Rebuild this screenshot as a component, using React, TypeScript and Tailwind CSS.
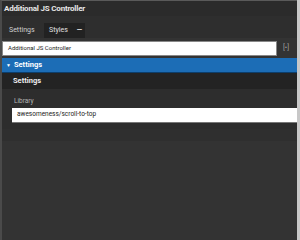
export default function App() {
  return (
    <div
      className="w-[300px] h-[240px] overflow-hidden bg-[#c8c8c8] flex"
      style={{ fontFamily: 'Roboto, "Open Sans", sans-serif' }}
    >
      <div className="w-[297px] h-full flex flex-col bg-[#333333] border-l-2 border-[#4a4a4a] border-t border-t-[#5a5a5a]">
        <div className="h-[15px] bg-[#2b2b2b] flex items-center pl-[2px] text-[8px] font-bold text-[#e6e6e6] leading-none tracking-[-0.2px]">
          Additional JS Controller
        </div>
        <div className="h-[22px] bg-[#2e2e2e] flex items-end pl-[2px]">
          <div className="w-[40px] h-[15px] pl-[5px] flex items-center text-[7px] text-[#d0d0d0] leading-none">
            Settings
          </div>
          <div className="w-[41px] h-[15px] bg-[#222222] pl-[5px] flex items-center gap-[9px] text-[7px] text-[#e0e0e0] leading-none">
            <span>Styles</span>
            <span className="font-bold">—</span>
          </div>
        </div>
        <div className="h-[20px] bg-[#333333] flex items-center pr-[2px]">
          <div className="w-[275px] h-[15px] bg-white border border-[#888] flex items-center pl-[5px] text-[6px] text-[#222] leading-none">
            Additional JS Controller
          </div>
          <div className="flex-1 flex justify-center text-[7px] text-[#a0a0a0] leading-none">[•]</div>
        </div>
        <div className="h-[15px] bg-[#1c6db6] border-b border-[#0d3e6b] flex items-center pl-[4px] text-[7.5px] font-bold text-white leading-none gap-[3px]">
          <span className="text-[5px]">▼</span>
          <span>Settings</span>
        </div>
        <div className="h-[16px] bg-[#232323] flex items-center pl-[11px] text-[7.5px] font-bold text-[#ededed] leading-none">
          Settings
        </div>
        <div className="bg-[#2d2d2d] pl-[10px] pt-[9px] pb-[6px]">
          <div className="text-[6.5px] text-[#b4b4b4] leading-none mb-[3px] pl-[2px]">Library</div>
          <div className="h-[15px] bg-white border-b border-[#777] flex items-center pl-[5px] text-[6.5px] text-[#222] leading-none">
            awesomeness/scroll-to-top
          </div>
        </div>
        <div className="h-[12px] bg-[#2f2f2f]" />
        <div className="flex-1 bg-[#333333]" />
      </div>
    </div>
  )
}
